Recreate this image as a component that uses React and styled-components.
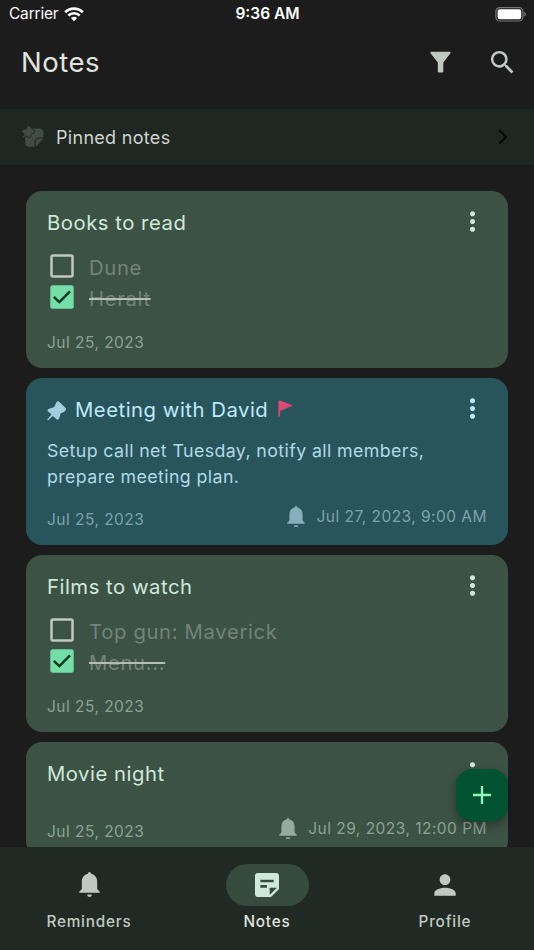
import styled, { createGlobalStyle } from 'styled-components'
import { MdSearch, MdMoreVert, MdPerson, MdStickyNote2 } from 'react-icons/md'


    const GlobalStyle = createGlobalStyle`
    * {
        box-sizing: border-box;
    }
    body {
        margin: 0;
        background-color: #1b1c1b;
        font-family: Inter, "Liberation Sans", sans-serif;
    }
    svg {
        display: block;
        flex-shrink: 0;
    }
    `
    const StScreen = styled.div`
    position: relative;
    display: flex;
    flex-direction: column;
    width: 534px;
    height: 950px;
    overflow: hidden;
    background-color: #1b1c1b;
    `
    const StStatus = styled.div`
    display: grid;
    grid-template-columns: 1fr auto 1fr;
    align-items: center;
    height: 28px;
    padding: 0 7px 0 9px;
    color: #ffffff;
    font-size: 15.5px;
    line-height: 28px;
    `
    const StCarrier = styled.div`
    display: flex;
    align-items: center;
    gap: 6px;
    letter-spacing: -0.2px;
    `
    const StClock = styled.div`
    margin-right: 1px;
    font-weight: 600;
    `
    const StBattery = styled.div`
    display: flex;
    justify-content: flex-end;
    `
    const StHeader = styled.div`
    display: flex;
    align-items: center;
    height: 81px;
    padding: 0 16px 13px 21px;
    color: #c0c9c1;
    `
    const StHeading = styled.h1`
    flex: 1;
    margin: 0;
    color: #e1e3df;
    font-size: 27.5px;
    font-weight: 370;
    letter-spacing: 0.5px;
    `
    const StActions = styled.div`
    display: flex;
    align-items: center;
    gap: 36px;
    `
    const StPinned = styled.div`
    display: flex;
    align-items: center;
    height: 56px;
    padding: 0 26px 0 22px;
    background-color: #1f2722;
    `
    const StPinnedText = styled.div`
    flex: 1;
    margin-left: 12px;
    color: #d0d4cf;
    font-size: 18px;
    letter-spacing: 0.3px;
    `
    const StList = styled.div`
    flex: 1;
    display: flex;
    flex-direction: column;
    gap: 10px;
    min-height: 0;
    padding: 26px 26px 0;
    overflow: hidden;
    `
    const StCard = styled.div`
    display: flex;
    flex-direction: column;
    flex-shrink: 0;
    height: ${(props) => props.$height}px;
    padding: 15px 21px 13px;
    border-radius: 16px;
    background-color: ${(props) => (props.$blue ? '#28545c' : '#3b5244')};
    color: ${(props) => (props.$blue ? '#bfe9f9' : '#cfe9d9')};
    `
    const StCardTop = styled.div`
    display: flex;
    align-items: center;
    height: 32px;
    margin-right: -1px;
    `
    const StTitle = styled.h2`
    margin: 0;
    font-size: 20.3px;
    font-weight: 430;
    letter-spacing: 0.52px;
    white-space: nowrap;
    `
    const StPinSlot = styled.div`
    margin: 4px 8px 0 0;
    color: #a3cddd;
    `
    const StFlagSlot = styled.div`
    margin: -2px 0 0 10px;
    `
    const StMenu = styled.div`
    margin: -1px 0.5px 0 auto;
    `
    const StBody = styled.p`
    margin: 13px 0 0;
    color: #b2d9e7;
    font-size: 17.8px;
    line-height: 25.6px;
    letter-spacing: 0.39px;
    white-space: pre-line;
    `
    const StChecks = styled.div`
    display: flex;
    flex-direction: column;
    margin-top: 12px;
    `
    const StCheckRow = styled.div`
    display: flex;
    align-items: center;
    gap: 15px;
    height: 31px;
    padding-left: 3px;
    `
    const StCheckText = styled.div`
    padding-top: 4px;
    color: #738479;
    font-size: 20.3px;
    font-weight: 370;
    letter-spacing: 0.65px;
    line-height: 24px;
    text-decoration: ${(props) => (props.$done ? 'line-through 1.5px #b4beb5' : 'none')};
    `
    const StCardFoot = styled.div`
    display: flex;
    align-items: center;
    justify-content: space-between;
    height: 26px;
    margin-top: auto;
    color: ${(props) => (props.$blue ? '#7da2ae' : '#8aa394')};
    font-size: 15.5px;
    letter-spacing: 0.47px;
    `
    const StRemind = styled.div`
    display: flex;
    align-items: center;
    gap: 11px;
    margin-top: -5px;
    `
    const StBellSlot = styled.div`
    color: ${(props) => (props.$blue ? '#86aebc' : '#93ac9d')};
    `
    const StFab = styled.button`
    position: absolute;
    right: 26px;
    bottom: 129px;
    display: flex;
    align-items: center;
    justify-content: center;
    width: 52px;
    height: 52px;
    padding: 0;
    border: none;
    border-radius: 16px;
    background-color: #005231;
    color: #8ef8ba;
    box-shadow: 0 4px 10px rgba(0, 0, 0, 0.32);
    cursor: pointer;
    `
    const StNav = styled.div`
    display: grid;
    grid-template-columns: repeat(3, 1fr);
    height: 103px;
    padding-top: 17px;
    background-color: #202924;
    `
    const StTab = styled.div`
    display: flex;
    flex-direction: column;
    align-items: center;
    color: ${(props) => (props.$active ? '#e1e3df' : '#c0c9c1')};
    font-size: 15.3px;
    font-weight: 450;
    letter-spacing: 0.8px;
    `
    const StPill = styled.div`
    display: flex;
    align-items: center;
    justify-content: center;
    width: 83px;
    height: 42px;
    margin-bottom: 6px;
    border-radius: 21px;
    background-color: ${(props) => (props.$active ? '#364b3e' : 'transparent')};
    color: ${(props) => (props.$active ? '#cfe9d9' : '#c0c9c1')};
    `


const notes = [
    {
        id: 1,
        title: 'Books to read',
        height: 177,
        checks: [
            { text: 'Dune', done: false },
            { text: 'Heralt', done: true },
        ],
        date: 'Jul 25, 2023',
    },
    {
        id: 2,
        title: 'Meeting with David',
        height: 167,
        blue: true,
        pinned: true,
        flag: true,
        body: 'Setup call net Tuesday, notify all members,\nprepare meeting plan.',
        date: 'Jul 25, 2023',
        remind: 'Jul 27, 2023, 9:00 AM',
    },
    {
        id: 3,
        title: 'Films to watch',
        height: 177,
        checks: [
            { text: 'Top gun: Maverick', done: false },
            { text: 'Menu...', done: true },
        ],
        date: 'Jul 25, 2023',
    },
    {
        id: 4,
        title: 'Movie night',
        height: 115,
        date: 'Jul 25, 2023',
        remind: 'Jul 29, 2023, 12:00 PM',
    },
]

function Wifi() {
    return (
        <svg width="20" height="15" viewBox="0 0 20 15" fill="none" stroke="#fff" strokeWidth="2.6">
            <path d="M1.2 5.2a12.6 12.6 0 0 1 17.6 0" />
            <path d="M4.3 8.5a8.2 8.2 0 0 1 11.4 0" />
            <path d="M10 14.3 6.9 11.1a4.8 4.8 0 0 1 6.2 0z" fill="#fff" stroke="none" />
        </svg>
    )
}

function Battery() {
    return (
        <svg width="32" height="15" viewBox="0 0 32 15">
            <rect x="0.9" y="0.6" width="27" height="13.4" rx="3.8" fill="none" stroke="#767776" strokeWidth="1.2" />
            <rect x="2.6" y="2.3" width="23.6" height="10" rx="2.2" fill="#fff" />
            <path d="M29.2 5v4.6c1-.4 1.7-1.2 1.7-2.3s-.7-1.9-1.7-2.3z" fill="#767776" />
        </svg>
    )
}

function Funnel() {
    return (
        <svg width="21" height="22" viewBox="0 0 21 22" fill="currentColor">
            <path d="M1.2.7H19.8Q21 1.1 20.5 2.2L13.3 11.5V20.4Q13.2 21.5 12.2 21.5H8.9Q7.9 21.5 7.8 20.4V11.5L.5 2.2Q0 1.1 1.2.7z" />
        </svg>
    )
}

function PinnedNote() {
    return (
        <svg width="22" height="22" viewBox="0 0 22 22" fill="#414c45">
            <path d="M7.2 2.4H17.4a4 4 0 0 1 4 4V11.4H17.4A5 5 0 0 0 12.4 16.4V20.8H7.2a4 4 0 0 1-4-4V6.4a4 4 0 0 1 4-4z" />
            <path d="M13.6 20.8V16.2A3.7 3.7 0 0 1 17.3 12.5H21.4z" />
            <path
                d="M5.6.5Q6.5-.3 7.3.4L11.7 4.6Q12.6 5.7 11.4 6.7L9 7.8 8 10.8Q7.4 12 6.2 11.2L4 9.2.9 12 .2 11.4 2.9 8.2.5 6Q-.3 4.8.9 4.3L4.4 3.3z"
                stroke="#1f2722"
                strokeWidth="1.6"
                paintOrder="stroke"
            />
        </svg>
    )
}

function Pin() {
    return (
        <svg width="20" height="20" viewBox="0 0 20 20" fill="currentColor">
            <path d="M9.6.9Q10.8-.2 12.1.7L18.6 7Q19.5 8.1 18.5 9.4 17.2 11.3 13.7 12.2L12.1 17.5Q11.1 19.3 9.6 18.3L5.8 14.9 1 19.4.2 18.6 4.5 13.5.9 10.3Q-.2 8.8 1.5 7.9L7.2 6z" />
        </svg>
    )
}

function Flag() {
    return (
        <svg width="15" height="17" viewBox="0 0 15 17" fill="#dc4a74">
            <path d="M.4 1.2Q.8.2 2 .5L14 5Q14.8 5.5 14 6.1L2 10.9V16.4H.4z" />
        </svg>
    )
}

function Bell({ width }) {
    return (
        <svg width={width} height={width * 1.2} viewBox="0 0 20 24" fill="currentColor">
            <path d="M10 0Q11.3 0 11.6 1.6C15 2.4 17.3 5.2 17.3 9V16.2L19.7 18.7Q20.2 19.7 19.2 19.8H.8Q-.2 19.7.3 18.7L2.7 16.2V9C2.7 5.2 5 2.4 8.4 1.6Q8.7 0 10 0z" />
            <path d="M7.7 21.4H12.3Q11.9 23.8 10 23.8T7.7 21.4z" />
        </svg>
    )
}

function Checkbox({ done }) {
    if (done) {
        return (
            <svg width="24" height="24" viewBox="0 0 24 24">
                <rect x="0.3" y="0.3" width="23.4" height="23.4" rx="2.5" fill="#75dda7" />
                <path d="M3.8 11.8l5.6 5.3L20 6.3" fill="none" stroke="#00391f" strokeWidth="2.4" />
            </svg>
        )
    }
    return (
        <svg width="24" height="24" viewBox="0 0 24 24">
            <rect x="1.5" y="1.5" width="21" height="21" rx="1.5" fill="none" stroke="#c0c9c1" strokeWidth="2.5" />
        </svg>
    )
}

function Chevron() {
    return (
        <svg width="10" height="16" viewBox="0 0 10 16" fill="none" stroke="#060706" strokeWidth="2">
            <path d="M1.3 1.2 8 8 1.3 14.8" />
        </svg>
    )
}

function Plus() {
    return (
        <svg width="18" height="18" viewBox="0 0 18 18" fill="none" stroke="currentColor" strokeWidth="2.3">
            <path d="M9 0v18M0 9h18" />
        </svg>
    )
}

function Note({ note }) {
    return (
        <StCard $blue={note.blue} $height={note.height}>
            <StCardTop>
                {note.pinned && <StPinSlot><Pin /></StPinSlot>}
                <StTitle>{note.title}</StTitle>
                {note.flag && <StFlagSlot><Flag /></StFlagSlot>}
                <StMenu><MdMoreVert size={31} /></StMenu>
            </StCardTop>
            {note.body && <StBody>{note.body}</StBody>}
            {note.checks && (
                <StChecks>
                    {note.checks.map((item) => (
                        <StCheckRow key={item.text}>
                            <Checkbox done={item.done} />
                            <StCheckText $done={item.done}>{item.text}</StCheckText>
                        </StCheckRow>
                    ))}
                </StChecks>
            )}
            <StCardFoot $blue={note.blue}>
                <div>{note.date}</div>
                {note.remind && (
                    <StRemind>
                        <StBellSlot $blue={note.blue}><Bell width={18} /></StBellSlot>
                        <div>{note.remind}</div>
                    </StRemind>
                )}
            </StCardFoot>
        </StCard>
    )
}

function App() {
    return (
        <>
        <GlobalStyle />
        <StScreen>
            <StStatus>
                <StCarrier>Carrier <Wifi /></StCarrier>
                <StClock>9:36 AM</StClock>
                <StBattery><Battery /></StBattery>
            </StStatus>
            <StHeader>
                <StHeading>Notes</StHeading>
                <StActions>
                    <Funnel />
                    <MdSearch size={31} />
                </StActions>
            </StHeader>
            <StPinned>
                <PinnedNote />
                <StPinnedText>Pinned notes</StPinnedText>
                <Chevron />
            </StPinned>
            <StList>
                {notes.map((note) => <Note key={note.id} note={note} />)}
            </StList>
            <StNav>
                <StTab>
                    <StPill><Bell width={21} /></StPill>
                    Reminders
                </StTab>
                <StTab $active>
                    <StPill $active><MdStickyNote2 size={32} /></StPill>
                    Notes
                </StTab>
                <StTab>
                    <StPill><MdPerson size={32} /></StPill>
                    Profile
                </StTab>
            </StNav>
            <StFab aria-label="Add note"><Plus /></StFab>
        </StScreen>
        </>
    )
}

export default App
